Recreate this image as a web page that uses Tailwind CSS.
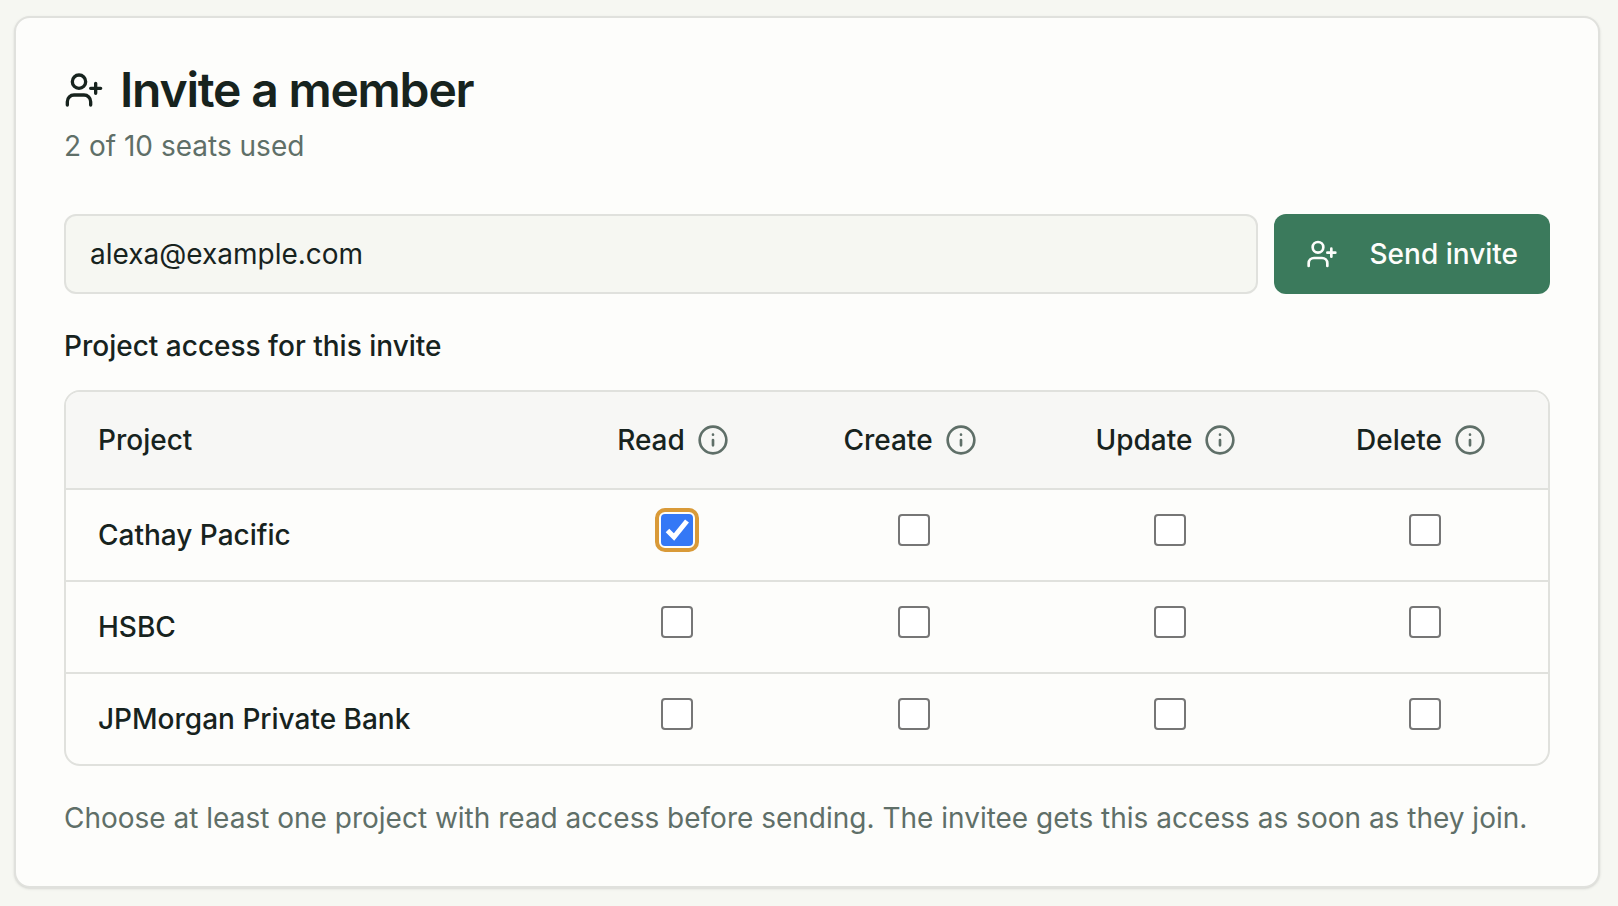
<!DOCTYPE html>
<html lang="en">
<head>
    <meta charset="UTF-8">
    <meta name="viewport" content="width=device-width, initial-scale=1.0">
    <title>Invite a member</title>
    <script src="https://cdn.jsdelivr.net/npm/@tailwindcss/browser@4"></script>
</head>
<body class="min-h-screen bg-[#f6f7f2] pt-4 pl-[14px] pr-[18px] pb-4 font-['Inter',sans-serif] text-[28px] leading-10 text-[#17231e]">
    <main class="rounded-2xl border-2 border-[#e0e1dd] bg-[#fdfdfb] p-12 shadow-sm">
        <header>
            <h1 class="flex items-center gap-4 text-5xl leading-12 font-semibold tracking-tight">
                <svg class="size-10" viewBox="0 0 24 24" fill="none" stroke="currentColor" stroke-width="2" stroke-linecap="round" stroke-linejoin="round" aria-hidden="true">
                    <path d="M16 21v-2a4 4 0 0 0-4-4H6a4 4 0 0 0-4 4v2"/>
                    <circle cx="9" cy="7" r="4"/>
                    <path d="M19 8v6M22 11h-6"/>
                </svg>
                Invite a member
            </h1>
            <p class="mt-3 text-[#5f6f68]">2 of 10 seats used</p>
        </header>

        <form class="mt-12">
            <div class="flex gap-4">
                <input type="email" value="alexa@example.com" aria-label="Email address"
                       class="h-20 min-w-0 flex-1 rounded-xl border-2 border-[#e0e1dd] bg-[#f6f7f2] px-6">
                <button type="submit" class="flex h-20 items-center gap-8 rounded-xl bg-[#3b7a5c] px-8 font-medium text-[#fdfdfb]">
                    <svg class="size-8" viewBox="0 0 24 24" fill="none" stroke="currentColor" stroke-width="2" stroke-linecap="round" stroke-linejoin="round" aria-hidden="true">
                        <path d="M16 21v-2a4 4 0 0 0-4-4H6a4 4 0 0 0-4 4v2"/>
                        <circle cx="9" cy="7" r="4"/>
                        <path d="M19 8v6M22 11h-6"/>
                    </svg>
                    Send invite
                </button>
            </div>

            <h2 class="mt-8 font-medium" id="accessTitle">Project access for this invite</h2>

            <div class="mt-6 overflow-hidden rounded-2xl border-2 border-[#e0e1dd]">
                <table class="w-full" aria-labelledby="accessTitle">
                    <colgroup>
                        <col class="w-[498px]">
                        <col class="w-[226px]">
                        <col class="w-[248px]">
                        <col class="w-[264px]">
                        <col class="w-[246px]">
                    </colgroup>
                    <thead class="bg-[#f7f7f5]">
                        <tr class="h-[97px] border-b-2 border-[#e0e1dd]" id="accessHead">
                            <th scope="col" class="px-8 text-left font-medium">Project</th>
                        </tr>
                    </thead>
                    <tbody id="accessRows"></tbody>
                </table>
            </div>

            <p class="mt-8 text-[#5f6f68]">Choose at least one project with read access before sending. The invitee gets this access as soon as they join.</p>
        </form>
    </main>

    <script>
        const permissions = ['Read', 'Create', 'Update', 'Delete'];
        const projects = [
            { name: 'Cathay Pacific', access: ['Read'] },
            { name: 'HSBC', access: [] },
            { name: 'JPMorgan Private Bank', access: [] }
        ];

        // Column headings with their info buttons
        const head = document.getElementById('accessHead');
        permissions.forEach(permission => {
            const th = document.createElement('th');
            th.scope = 'col';
            th.className = 'font-medium';
            th.innerHTML = `
                <div class="flex items-center justify-center gap-1">
                    ${permission}
                    <button type="button" class="rounded-full p-2 text-[#5f6f68]" aria-label="About ${permission}">
                        <svg class="size-8" viewBox="0 0 24 24" fill="none" stroke="currentColor" stroke-width="2" stroke-linecap="round" stroke-linejoin="round">
                            <circle cx="12" cy="12" r="10"/>
                            <path d="M12 16v-4M12 8h.01"/>
                        </svg>
                    </button>
                </div>
            `;
            head.appendChild(th);
        });

        // One row per project
        const rows = document.getElementById('accessRows');
        projects.forEach(project => {
            const tr = document.createElement('tr');
            tr.className = 'border-b-2 border-[#e0e1dd] last:border-b-0';
            tr.innerHTML = `<th scope="row" class="px-8 text-left font-medium">${project.name}</th>` + permissions.map(permission => `
                <td class="pt-6 pb-[34px]">
                    <div class="mx-auto grid size-8">
                        <input type="checkbox" aria-label="${permission} ${project.name}" ${project.access.includes(permission) ? 'checked' : ''}
                               class="peer col-start-1 row-start-1 size-8 appearance-none rounded-sm border-2 border-[#767676] bg-white outline-[#d99a38] checked:border-[#3478f6] checked:bg-[#3478f6] focus:outline-4 focus:outline-offset-2">
                        <svg class="pointer-events-none invisible z-10 col-start-1 row-start-1 size-8 peer-checked:visible" viewBox="0 0 32 32" fill="none" stroke="white" stroke-width="5">
                            <path d="M6.5 16.5L13 23L26 7"/>
                        </svg>
                    </div>
                </td>
            `).join('');
            rows.appendChild(tr);
        });

        rows.querySelector('input:checked').focus();
    </script>
</body>
</html>
